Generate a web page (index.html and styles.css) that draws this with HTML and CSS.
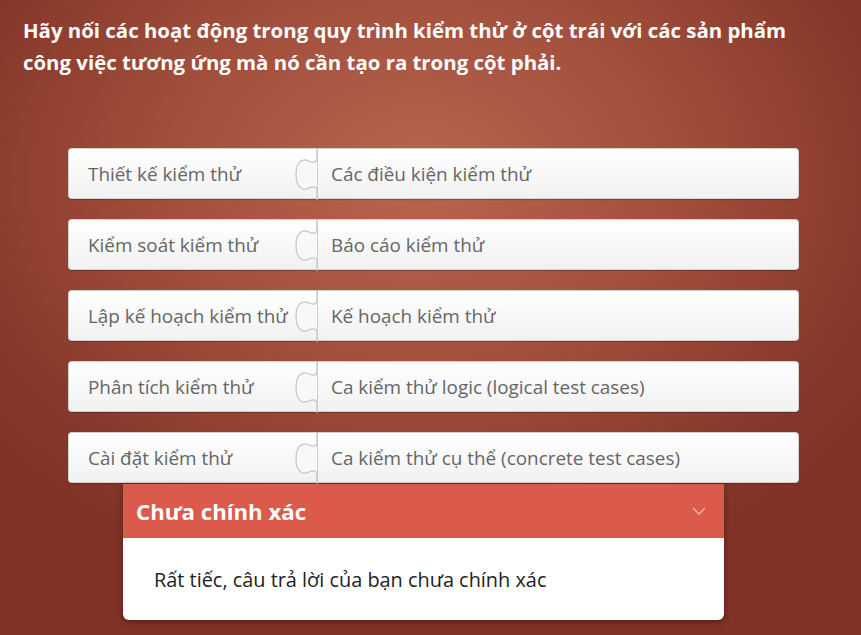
FILE: index.html
```html
<!DOCTYPE html>
<html lang="vi">
<head>
<meta charset="utf-8">
<link rel="stylesheet" href="styles.css">
</head>
<body>
<div class="slide">
  <h1 class="question">Hãy nối các hoạt động trong quy trình kiểm thử ở cột trái với các sản phẩm công việc tương ứng mà nó cần tạo ra trong cột phải.</h1>
  <div class="pairs">
    <div class="pair">
      <div class="left">Thiết kế kiểm thử</div>
      <div class="right"><svg class="knob" width="24" height="53" viewBox="-22 -1 24 53"><path d="M0,0 V10 C0,13 -4,14 -8,12 C-14,9 -21,12 -21,25.5 C-21,39 -14,42 -8,39 C-4,37 0,38 0,41 V51" /></svg>Các điều kiện kiểm thử</div>
    </div>
    <div class="pair">
      <div class="left">Kiểm soát kiểm thử</div>
      <div class="right"><svg class="knob" width="24" height="53" viewBox="-22 -1 24 53"><path d="M0,0 V10 C0,13 -4,14 -8,12 C-14,9 -21,12 -21,25.5 C-21,39 -14,42 -8,39 C-4,37 0,38 0,41 V51" /></svg>Báo cáo kiểm thử</div>
    </div>
    <div class="pair">
      <div class="left">Lập kế hoạch kiểm thử</div>
      <div class="right"><svg class="knob" width="24" height="53" viewBox="-22 -1 24 53"><path d="M0,0 V10 C0,13 -4,14 -8,12 C-14,9 -21,12 -21,25.5 C-21,39 -14,42 -8,39 C-4,37 0,38 0,41 V51" /></svg>Kế hoạch kiểm thử</div>
    </div>
    <div class="pair">
      <div class="left">Phân tích kiểm thử</div>
      <div class="right"><svg class="knob" width="24" height="53" viewBox="-22 -1 24 53"><path d="M0,0 V10 C0,13 -4,14 -8,12 C-14,9 -21,12 -21,25.5 C-21,39 -14,42 -8,39 C-4,37 0,38 0,41 V51" /></svg>Ca kiểm thử logic (logical test cases)</div>
    </div>
    <div class="pair">
      <div class="left">Cài đặt kiểm thử</div>
      <div class="right"><svg class="knob" width="24" height="53" viewBox="-22 -1 24 53"><path d="M0,0 V10 C0,13 -4,14 -8,12 C-14,9 -21,12 -21,25.5 C-21,39 -14,42 -8,39 C-4,37 0,38 0,41 V51" /></svg>Ca kiểm thử cụ thể (concrete test cases)</div>
    </div>
  </div>
  <div class="feedback">
    <div class="fb-head">
      <span class="fb-title">Chưa chính xác</span>
      <svg class="chev" width="14" height="8" viewBox="0 0 14 8"><path d="M1,1 L7,7 L13,1" /></svg>
    </div>
    <div class="fb-body">Rất tiếc, câu trả lời của bạn chưa chính xác</div>
  </div>
</div>
</body>
</html>
```
FILE: styles.css
```css
html, body {
  margin: 0;
  padding: 0;
  width: 861px;
  height: 635px;
  overflow: hidden;
}
body {
  font-family: "Open Sans", "Noto Sans", sans-serif;
  background: radial-gradient(ellipse 560px 420px at 420px 180px, #b8664d 0%, #a2503d 45%, #8a3a2c 80%, #813126 100%);
}
.slide {
  display: flex;
  flex-direction: column;
  height: 635px;
}
.question {
  margin: 14px 0 0 23px;
  width: 800px;
  font-size: 20.4px;
  line-height: 32px;
  font-weight: 700;
  color: #ffffff;
}
.pairs {
  display: flex;
  flex-direction: column;
  gap: 20px;
  margin: 70px 0 0 68px;
  width: 731px;
}
.pair {
  display: flex;
  height: 51px;
}
.left, .right {
  box-sizing: border-box;
  height: 51px;
  display: flex;
  align-items: center;
  font-size: 18.9px;
  color: #666666;
  background: linear-gradient(#ffffff, #f1f1f1);
  border: 1px solid #d2d2d2;
  box-shadow: 0 1px 1px rgba(0,0,0,0.25);
}
.left {
  width: 249px;
  padding-left: 19px;
  border-radius: 4px 0 0 4px;
  border-right: none;
  white-space: nowrap;
}
.right {
  position: relative;
  flex: 1;
  padding-left: 13px;
  border-radius: 0 4px 4px 0;
  border-left: 1px solid #cfcfcf;
}
.knob {
  position: absolute;
  left: -23px;
  top: -1px;
}
.knob path {
  fill: #f8f8f8;
  stroke: #c6c6c6;
  stroke-width: 1.2;
}
.feedback {
  margin: 1px 0 0 123px;
  width: 601px;
  border-radius: 0 0 6px 6px;
  background: #ffffff;
  box-shadow: 0 2px 6px rgba(0,0,0,0.35);
  overflow: hidden;
}
.fb-head {
  height: 54px;
  background: #dc5a4c;
  display: flex;
  align-items: center;
  justify-content: space-between;
  padding: 0 18px 0 13px;
}
.fb-title {
  font-size: 22.2px;
  font-weight: 700;
  color: #ffffff;
}
.chev path {
  fill: none;
  stroke: #f3b0a8;
  stroke-width: 1.3;
}
.fb-body {
  height: 82px;
  display: flex;
  align-items: center;
  padding-left: 31px;
  font-size: 19.9px;
  color: #222222;
}
```
